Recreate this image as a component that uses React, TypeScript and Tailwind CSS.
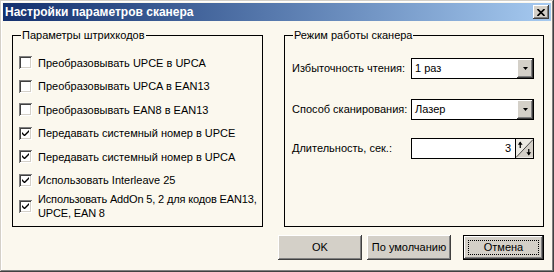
import type { ReactNode } from "react";

const RAISED =
  "bg-[#d4d0c8] shadow-[inset_-1px_-1px_0_#404040,inset_1px_1px_0_#ffffff,inset_-2px_-2px_0_#808080,inset_2px_2px_0_#d4d0c8]";

const OPTIONS = [
  { label: "Преобразовывать UPCE в UPCA", checked: false },
  { label: "Преобразовывать UPCA в EAN13", checked: false },
  { label: "Преобразовывать EAN8 в EAN13", checked: false },
  { label: "Передавать системный номер в UPCE", checked: true },
  { label: "Передавать системный номер в UPCA", checked: true },
  { label: "Использовать Interleave 25", checked: true },
];

function CheckBox({ checked }: { checked: boolean }) {
  return (
    <span className="flex h-[13px] w-[13px] shrink-0 items-center justify-center bg-white shadow-[inset_1px_1px_0_#808080,inset_-1px_-1px_0_#ffffff,inset_2px_2px_0_#404040,inset_-2px_-2px_0_#d4d0c8]">
      {checked && (
        <svg width="7" height="7" viewBox="0 0 7 7">
          <path d="M0 2 L0 4 L2 6 L3 6 L7 2 L7 0 L2.5 4.5 Z" fill="#000" />
        </svg>
      )}
    </span>
  );
}

function GroupBox({ title, className, children }: { title: string; className: string; children: ReactNode }) {
  return (
    <div className={`relative border border-black ${className}`}>
      <span className="absolute left-[8px] top-[-8px] whitespace-nowrap bg-[#fbf8ee] px-[1px] leading-[14px]">
        {title}
      </span>
      {children}
    </div>
  );
}

function Combo({ value }: { value: string }) {
  return (
    <div className="flex h-[21px] w-[123px] shrink-0 border border-black bg-white">
      <span className="flex-1 pl-[3px] leading-[19px]">{value}</span>
      <span className={`flex w-[16px] items-center justify-center ${RAISED}`}>
        <svg width="5" height="3" viewBox="0 0 5 3">
          <path d="M0 0 H5 L2.5 3 Z" fill="#000" />
        </svg>
      </span>
    </div>
  );
}

function Spin({ value }: { value: string }) {
  return (
    <div className="flex h-[21px] w-[123px] shrink-0 border border-black bg-white">
      <span className="flex-1 pr-[4px] text-right leading-[19px]">{value}</span>
      <svg width="18" height="19" viewBox="0 0 18 19" className="border-l border-black">
        <rect width="18" height="19" fill="#d4d0c8" />
        <path d="M0 0 H18 L0 19 Z" fill="#eceae3" />
        <path d="M0 19 L18 0" stroke="#404040" strokeWidth="1" />
        <path d="M4.5 3 V9" stroke="#000" strokeWidth="1.3" />
        <path d="M2 5.5 L4.5 2 L7 5.5 Z" fill="#000" />
        <path d="M13.5 10 V16" stroke="#000" strokeWidth="1.3" />
        <path d="M11 13.5 L13.5 17 L16 13.5 Z" fill="#000" />
      </svg>
    </div>
  );
}

export default function App() {
  return (
    <div className="flex h-[272px] w-[554px] flex-col bg-[#fbf8ee] p-[3px] font-['Liberation_Sans',Arial,sans-serif] text-[11px] text-black shadow-[inset_-1px_-1px_0_#404040,inset_1px_1px_0_#d4d0c8,inset_-2px_-2px_0_#808080,inset_2px_2px_0_#ffffff]">
      {/* title bar */}
      <div className="flex h-[18px] items-center justify-between bg-linear-to-r from-[#14306e] to-[#a6caf0] pl-[2px] pr-[2px]">
        <span className="text-[12px] font-bold text-white">Настройки параметров сканера</span>
        <span className={`flex h-[14px] w-[16px] items-center justify-center ${RAISED}`}>
          <svg width="8" height="7" viewBox="0 0 8 7">
            <path d="M0.5 0 L7.5 7 M7.5 0 L0.5 7" stroke="#000" strokeWidth="1.6" />
          </svg>
        </span>
      </div>

      <div className="flex flex-1 flex-col pl-[9px] pr-[7px] pt-[14px]">
        <div className="flex h-[192px] gap-[21px]">
          <GroupBox title="Параметры штрихкодов" className="w-[251px]">
            <div className="flex flex-col pl-[6px] pt-[15px]">
              {OPTIONS.map((o) => (
                <div key={o.label} className="flex h-[23.5px] items-center gap-[6px] whitespace-nowrap">
                  <CheckBox checked={o.checked} />
                  <span>{o.label}</span>
                </div>
              ))}
              <div className="flex h-[28px] items-center gap-[6px] whitespace-nowrap">
                <CheckBox checked />
                <span className="leading-[14px] tracking-[-0.15px]">
                  Использовать AddOn 5, 2 для кодов EAN13,
                  <br />
                  UPCE, EAN 8
                </span>
              </div>
            </div>
          </GroupBox>

          <GroupBox title="Режим работы сканера" className="w-[260px]">
            <div className="flex flex-col whitespace-nowrap pl-[7px] pr-[9px] pt-[22px]">
              <div className="flex items-center justify-between">
                <span>Избыточность чтения:</span>
                <Combo value="1 раз" />
              </div>
              <div className="mt-[20px] flex items-center justify-between">
                <span>Способ сканирования:</span>
                <Combo value="Лазер" />
              </div>
              <div className="mt-[18px] flex items-center justify-between">
                <span>Длительность, сек.:</span>
                <Spin value="3" />
              </div>
            </div>
          </GroupBox>
        </div>

        <div className="mt-[8px] flex justify-end">
          <button className={`h-[25px] w-[84px] ${RAISED}`}>OK</button>
          <button className={`ml-[5px] h-[25px] w-[84px] ${RAISED}`}>По умолчанию</button>
          <button className="relative ml-[12px] h-[25px] w-[81px] border border-black">
            <span className={`flex h-full w-full items-center justify-center ${RAISED}`}>Отмена</span>
            <span className="absolute inset-[4px] border border-dotted border-black" />
          </button>
        </div>
      </div>
    </div>
  );
}
